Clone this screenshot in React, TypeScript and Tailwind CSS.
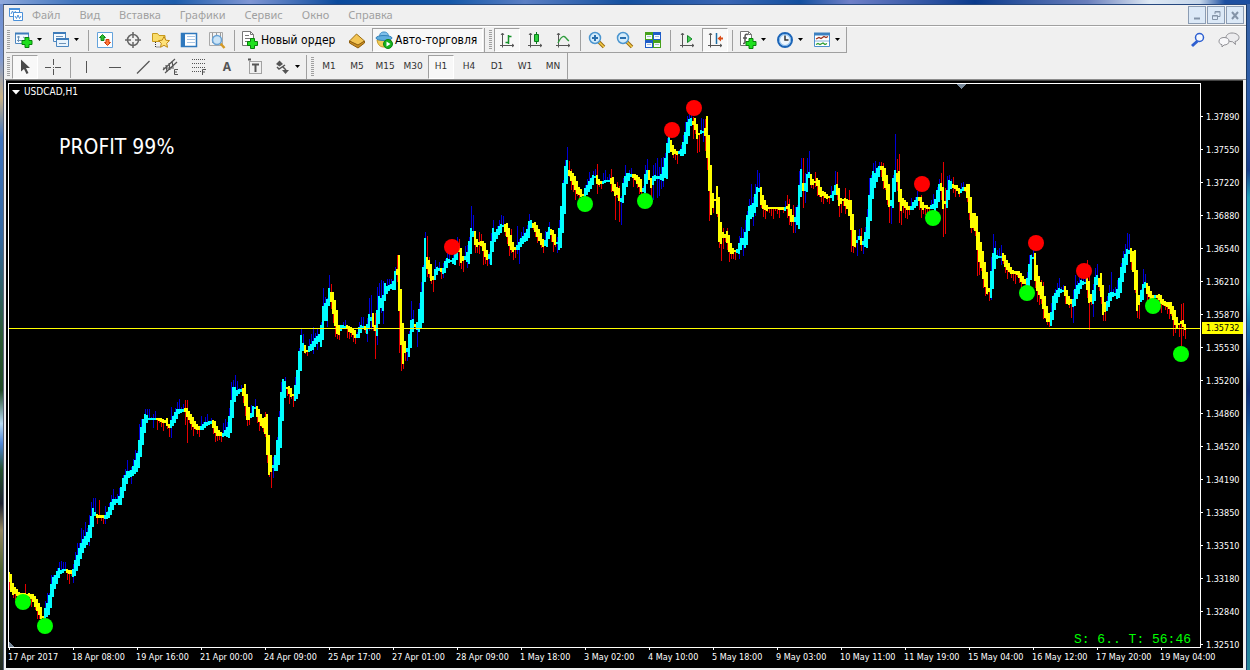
import type { ReactNode } from "react"

type Bar = { x: number; top: number; bottom: number; high: number; low: number; up: boolean }

// middle of the candle bodies, x / y on the chart canvas
const curve: number[][] = [
  [9, 577], [13, 589], [19, 594], [29, 595], [33, 598], [38, 607], [43, 617], [47, 610], [50, 602], [52, 590],
  [55, 582], [59, 573], [65, 570], [70, 572], [73, 573], [75, 568], [78, 560], [82, 548], [85, 542], [88, 537],
  [91, 527], [94, 513], [97, 516], [105, 517], [108, 515], [114, 502], [120, 500], [123, 488], [128, 475], [132, 473],
  [135, 467], [138, 460], [141, 442], [143, 432], [146, 419], [157, 419], [167, 422], [169, 426], [172, 423], [178, 412],
  [185, 410], [190, 417], [195, 425], [200, 429], [205, 425], [212, 422], [215, 427], [218, 433], [223, 435], [228, 431],
  [230, 423], [232, 410], [234, 395], [238, 392], [242, 390], [245, 395], [247, 407], [250, 417], [255, 408], [258, 413],
  [262, 422], [266, 427], [268, 442], [269, 455], [272, 468], [275, 463], [278, 452], [280, 430], [282, 410], [284, 390],
  [287, 388], [290, 391], [293, 395], [295, 393], [298, 380], [300, 365], [301, 353], [303, 347], [307, 351], [312, 347],
  [317, 340], [322, 335], [323, 323], [325, 312], [327, 310], [329, 297], [331, 297], [333, 303], [336, 318], [339, 330],
  [342, 327], [347, 327], [352, 331], [357, 336], [362, 327], [367, 329], [370, 318], [373, 320], [375, 328], [377, 323],
  [380, 303], [383, 303], [385, 292], [390, 287], [394, 285], [397, 272], [399, 283], [401, 317], [403, 343], [405, 347],
  [407, 350], [410, 343], [412, 325], [416, 326], [418, 326], [421, 310], [424, 287], [425, 260], [427, 263], [429, 267],
  [433, 278], [438, 269], [443, 271], [448, 261], [454, 261], [457, 253], [459, 249], [462, 259], [467, 257], [470, 250],
  [472, 232], [474, 236], [477, 243], [482, 244], [485, 250], [488, 258], [491, 253], [493, 240], [498, 232], [503, 226],
  [507, 230], [510, 240], [514, 249], [518, 247], [523, 240], [527, 235], [531, 224], [535, 227], [538, 233], [543, 243],
  [546, 243], [550, 230], [554, 238], [557, 243], [560, 237], [562, 217], [565, 190], [567, 172], [569, 173], [572, 177],
  [575, 183], [578, 190], [583, 195], [587, 190], [590, 185], [595, 177], [599, 182], [602, 183], [606, 181], [612, 181],
  [615, 190], [618, 192], [621, 200], [623, 193], [626, 182], [630, 175], [635, 177], [640, 183], [643, 190], [647, 177],
  [649, 175], [651, 183], [655, 178], [662, 177], [665, 168], [668, 157], [669, 142], [673, 150], [677, 153], [682, 152],
  [685, 143], [687, 133], [691, 122], [695, 124], [698, 135], [701, 132], [705, 132], [708, 140], [709, 163], [711, 190],
  [713, 200], [717, 200], [718, 213], [721, 233], [723, 235], [727, 237], [730, 247], [733, 251], [738, 251], [742, 242],
  [745, 240], [747, 230], [750, 213], [753, 210], [757, 197], [759, 190], [763, 202], [767, 208], [777, 208], [785, 209],
  [788, 207], [792, 218], [796, 220], [799, 207], [801, 183], [803, 187], [806, 187], [809, 175], [812, 182], [817, 182],
  [821, 192], [825, 195], [828, 197], [833, 196], [836, 187], [838, 192], [840, 202], [843, 200], [848, 205], [851, 215],
  [853, 230], [856, 243], [859, 238], [863, 243], [866, 238], [868, 227], [870, 207], [873, 185], [877, 175], [881, 168],
  [885, 178], [888, 192], [891, 203], [893, 193], [896, 175], [898, 180], [901, 200], [905, 204], [910, 209], [914, 205],
  [919, 199], [923, 206], [930, 208], [935, 205], [939, 193], [941, 187], [943, 198], [946, 205], [948, 193], [951, 185],
  [957, 188], [960, 192], [964, 188], [968, 192], [970, 205], [972, 220], [976, 223], [978, 243], [981, 255], [984, 270],
  [987, 283], [989, 290], [992, 282], [994, 260], [996, 257], [1003, 257], [1007, 265], [1012, 272], [1018, 273], [1023, 280],
  [1027, 283], [1030, 272], [1033, 258], [1035, 267], [1038, 283], [1042, 293], [1045, 307], [1048, 317], [1051, 319], [1053, 308],
  [1056, 298], [1060, 291], [1065, 291], [1068, 300], [1073, 303], [1077, 292], [1082, 283], [1087, 283], [1089, 292], [1092, 301],
  [1094, 293], [1097, 280], [1101, 285], [1103, 300], [1106, 310], [1108, 302], [1112, 295], [1117, 294], [1120, 285], [1123, 270],
  [1127, 257], [1129, 252], [1132, 257], [1135, 270], [1137, 290], [1139, 300], [1143, 292], [1145, 285], [1148, 290], [1152, 297],
  [1158, 296], [1163, 302], [1170, 306], [1174, 315], [1178, 325], [1182, 322], [1185, 327],
]

// long wicks: x -> [high, low], 0 keeps the default
const wicks: Record<number, number[]> = {
  25: [584, 0], 37: [0, 619], 39: [0, 619], 51: [575, 0], 53: [575, 0], 63: [562, 0], 65: [562, 0], 73: [0, 583],
  75: [552, 0], 77: [543, 0], 79: [543, 0], 81: [528, 0], 85: [522, 0], 89: [515, 546], 91: [502, 0], 93: [498, 0], 95: [498, 0],
  97: [0, 524], 99: [500, 0], 105: [0, 524], 127: [460, 0], 131: [467, 484], 139: [424, 463], 145: [409, 0], 147: [409, 0],
  153: [0, 428], 169: [0, 437], 171: [407, 438], 185: [400, 425], 187: [400, 443], 217: [0, 441], 221: [0, 442], 225: [419, 0],
  231: [382, 0], 233: [380, 0], 235: [375, 0], 247: [0, 426], 255: [399, 0], 265: [412, 437], 267: [0, 463], 271: [0, 488],
  273: [0, 478], 281: [382, 0], 283: [379, 0], 293: [0, 407], 313: [327, 354], 317: [0, 350], 323: [288, 0], 325: [297, 0],
  327: [0, 327], 329: [275, 0], 331: [284, 0], 333: [296, 323], 335: [0, 337], 339: [0, 340], 349: [0, 339], 355: [0, 344],
  361: [317, 0], 363: [317, 0], 367: [0, 342], 369: [298, 331], 371: [295, 330], 375: [313, 359], 377: [287, 345],
  379: [283, 0], 381: [280, 313], 383: [281, 324], 387: [279, 0], 391: [279, 0], 397: [255, 0], 399: [257, 353],
  401: [0, 371], 403: [0, 369], 407: [0, 361], 411: [301, 346], 413: [310, 0], 417: [322, 347], 419: [303, 0], 425: [232, 0],
  427: [236, 0], 429: [257, 278], 433: [0, 292], 439: [262, 0], 443: [263, 278], 459: [239, 266], 461: [0, 269], 463: [0, 272],
  467: [245, 268], 469: [237, 0], 471: [206, 0], 473: [215, 0], 475: [0, 253], 479: [232, 0], 481: [234, 0], 483: [0, 265],
  487: [0, 266], 489: [0, 264], 491: [233, 0], 503: [216, 0], 511: [229, 253], 513: [0, 260], 517: [226, 254], 519: [0, 264],
  531: [220, 0], 537: [0, 243], 549: [222, 0], 557: [0, 253], 567: [147, 0], 569: [161, 0], 571: [169, 190],
  597: [164, 0], 605: [170, 0], 611: [169, 192], 615: [0, 220], 617: [182, 198], 619: [186, 222], 621: [0, 225], 623: [178, 0],
  625: [165, 0], 645: [165, 0], 647: [159, 0], 651: [0, 198], 653: [165, 200], 655: [163, 0], 657: [158, 198], 659: [167, 196],
  661: [158, 189], 663: [157, 187], 665: [153, 0], 669: [137, 0], 687: [116, 0], 693: [117, 139], 695: [0, 134], 697: [0, 153],
  699: [0, 152], 701: [118, 0], 703: [119, 142], 705: [119, 151], 707: [130, 170], 709: [0, 221], 711: [0, 214], 713: [0, 213],
  719: [0, 248], 721: [0, 261], 723: [228, 249], 727: [228, 0], 731: [0, 259], 739: [236, 259], 741: [227, 0], 743: [0, 256],
  745: [220, 0], 751: [184, 0], 753: [197, 226], 755: [184, 216], 757: [170, 0], 759: [173, 0], 763: [0, 217], 787: [195, 0],
  789: [199, 225], 793: [205, 233], 795: [0, 233], 799: [171, 0], 801: [158, 0], 803: [158, 208], 805: [173, 203],
  807: [158, 0], 809: [151, 0], 811: [0, 188], 815: [172, 187], 835: [171, 0], 837: [172, 200], 839: [0, 217], 841: [0, 213],
  845: [188, 0], 849: [190, 207], 851: [200, 252], 853: [0, 253], 857: [0, 256], 861: [228, 251], 863: [0, 254], 869: [178, 0],
  873: [163, 0], 875: [161, 0], 881: [162, 0], 883: [163, 189], 889: [0, 223], 891: [0, 224], 895: [134, 0], 897: [159, 0],
  899: [154, 223], 901: [0, 225], 907: [0, 219], 921: [195, 218], 933: [194, 0], 939: [179, 0], 941: [173, 0], 943: [162, 237],
  945: [188, 234], 947: [176, 0], 949: [175, 0], 953: [177, 0], 963: [182, 0], 971: [0, 233], 977: [0, 276], 979: [0, 275],
  983: [0, 288], 987: [0, 295], 989: [0, 301], 991: [257, 300], 993: [234, 0], 995: [241, 0], 1001: [245, 265], 1033: [250, 0],
  1035: [253, 0], 1037: [0, 302], 1039: [0, 305], 1041: [280, 0], 1043: [282, 319], 1045: [0, 319], 1049: [0, 327],
  1071: [0, 318], 1073: [0, 323], 1075: [275, 0], 1087: [260, 0], 1089: [270, 330], 1093: [0, 317], 1097: [264, 0],
  1103: [0, 321], 1105: [0, 321], 1111: [272, 0], 1127: [233, 0], 1129: [234, 0], 1135: [258, 0], 1137: [0, 318],
  1139: [0, 319], 1143: [269, 299], 1145: [274, 0], 1173: [0, 336], 1175: [0, 333], 1179: [0, 337], 1181: [304, 346],
  1183: [303, 0], 1185: [0, 339],
}

const signals = [
  [23, 602, 1], [45, 626, 1], [452, 247, 0], [585, 204, 1], [645, 201, 1], [672, 130, 0], [694, 108, 0], [922, 184, 0],
  [933, 218, 1], [1027, 293, 1], [1036, 243, 0], [1084, 271, 0], [1153, 306, 1], [1181, 354, 1],
]

const prices = [
  "1.37890", "1.37550", "1.37220", "1.36880", "1.36540", "1.36210", "1.35870", "1.35530", "1.35200", "1.34860",
  "1.34520", "1.34190", "1.33850", "1.33510", "1.33180", "1.32840", "1.32510",
]

const times = [
  "17 Apr 2017", "18 Apr 08:00", "19 Apr 16:00", "21 Apr 00:00", "24 Apr 09:00", "25 Apr 17:00", "27 Apr 01:00",
  "28 Apr 09:00", "1 May 18:00", "3 May 02:00", "4 May 10:00", "5 May 18:00", "9 May 03:00", "10 May 11:00",
  "11 May 19:00", "15 May 04:00", "16 May 12:00", "17 May 20:00", "19 May 04:00",
]

const menu = ["Файл", "Вид", "Вставка", "Графики", "Сервис", "Окно", "Справка"]
const frames = ["M1", "M5", "M15", "M30", "H1", "H4", "D1", "W1", "MN"]

function levelAt(x: number) {
  const i = curve.findIndex((p) => p[0] >= x)
  if (i <= 0) return i === 0 ? curve[0][1] : curve[curve.length - 1][1]
  const [x0, y0] = curve[i - 1]
  const [x1, y1] = curve[i]
  return y0 + ((y1 - y0) * (x - x0)) / (x1 - x0)
}

function buildBars(): Bar[] {
  const bars: Bar[] = []
  let up = false
  for (let x = 9; x <= 1185; x += 2) {
    const y = levelAt(x)
    const step = (levelAt(x + 2) - levelAt(x - 2)) / 2
    if (Math.abs(step) > 0.3) up = step < 0
    const half = Math.max(1, Math.min(Math.abs(step) * 1.3 + 1, 28))
    const top = Math.round(y - half)
    const bottom = Math.round(y + half)
    const tail = (x * 7) % 11
    const long = wicks[x] ?? [0, 0]
    bars.push({
      x,
      top,
      bottom,
      high: long[0] || (up ? top - tail : top),
      low: long[1] || (up ? bottom : bottom + tail),
      up,
    })
  }
  return bars
}

const bars = buildBars()

function Icon({ children, w = 18 }: { children: ReactNode; w?: number }) {
  return (
    <svg width={w} height="18" viewBox={`0 0 ${w} 18`} fill="none" className="shrink-0" aria-hidden="true">
      {children}
    </svg>
  )
}

function Grip() {
  return (
    <div className="w-[3px] h-5 mx-px self-center shrink-0 bg-[repeating-linear-gradient(to_bottom,#a0a0a0_0px,#a0a0a0_1px,#f0f0f0_1px,#f0f0f0_2px)]" />
  )
}

function Sep() {
  return (
    <div className="w-1.5 h-[21px] self-center shrink-0 flex justify-center">
      <div className="w-px bg-[#a0a0a0]" />
    </div>
  )
}

function Tool({ label, active, children }: { label: string; active?: boolean; children: ReactNode }) {
  return (
    <button
      aria-label={label}
      className={
        active
          ? "w-[26px] mx-px h-6 shrink-0 flex items-center justify-center bg-[#f8f8f8] border border-t-[#a0a0a0] border-l-[#a0a0a0] border-r-white border-b-white"
          : "w-7 h-6 shrink-0 flex items-center justify-center"
      }
    >
      {children}
    </button>
  )
}

function DropTool({ label, children }: { label: string; children: ReactNode }) {
  return (
    <button aria-label={label} className="w-[37px] h-6 pl-1 gap-1 shrink-0 flex items-center">
      {children}
      <svg width="5" height="4" viewBox="0 0 5 4" aria-hidden="true">
        <path d="M0 0h5L2.500 3z" fill="#000" />
      </svg>
    </button>
  )
}

function Plus({ x, y }: { x: number; y: number }) {
  return (
    <path
      transform={`translate(${x} ${y})`}
      d="M3.500 .5h4v3h3v4h-3v3h-4v-3h-3v-4h3z"
      fill="#1fe01f"
      stroke="#08820c"
    />
  )
}

function Axes() {
  return <path d="M4.500 2.500v14M2 14.500h14M3 4l1.500-2L6 4M14 13l2 1.500-2 1.500" stroke="#555" />
}

function Magnifier({ minus }: { minus?: boolean }) {
  return (
    <Icon>
      <path d="M11 11l5 5" stroke="#9a6a10" strokeWidth="3.500" />
      <path d="M11 11l5 5" stroke="#f5cf4a" strokeWidth="1.500" />
      <circle cx="7" cy="7" r="5.500" fill="#d5ecfb" stroke="#4b95cf" strokeWidth="1.500" />
      <path d={minus ? "M4 7h6" : "M4 7h6M7 4v6"} stroke="#2a6fae" strokeWidth="2" />
    </Icon>
  )
}

function Sheet() {
  return (
    <>
      <path d="M1.500 .5h8l3 3v11h-11z" fill="#fff" stroke="#777" />
      <path d="M9.500 .5v3h3" stroke="#777" />
    </>
  )
}

function MenuBar() {
  return (
    <div className="h-[21px] flex items-center justify-between border-b border-[#a0a0a0]">
      <nav className="flex items-center pl-[3px]">
        <Icon>
          <path d="M1.500 2.500h10v8h-10z" fill="#fff" stroke="#4a90d9" />
          <path d="M1 3h11" stroke="#4a90d9" strokeWidth="2" />
          <path d="M3 8l1.500-3L6 8l1.500-3" stroke="#4a90d9" />
          <path d="M5.500 6.500h9v8h-9z" fill="#fff" stroke="#4a90d9" />
          <path d="M7 10l1.500 2.500L10 9l1.500 3.500L13 10" stroke="#4a90d9" />
        </Icon>
        <div className="flex gap-[19px] pl-1.5">
          {menu.map((m) => (
            <button key={m} className="text-[11px] leading-5 text-[#a0a0a0]">
              {m}
            </button>
          ))}
        </div>
      </nav>
      <div className="flex gap-px pr-0.5">
        {[
          ["Свернуть", "M5 11.500h6"],
          ["Восстановить", "M4.500 8.500h5v4h-5zM4.500 9h5M7 7V4.500h5v5h-2M7 5h5"],
          ["Закрыть", "M5 5l6 7M11 5l-6 7"],
        ].map(([label, d]) => (
          <button
            key={label}
            aria-label={label}
            className="w-[18px] h-[18px] flex items-center justify-center border border-[#8b9cb3] bg-[#dce9f7]"
          >
            <svg width="16" height="16" viewBox="0 0 16 16" fill="none" aria-hidden="true">
              <path d={d} stroke="#8494a8" strokeWidth={label === "Восстановить" ? 1 : 2} />
            </svg>
          </button>
        ))}
      </div>
    </div>
  )
}

function MainToolbar() {
  return (
    <div className="flex items-start justify-between pl-px">
      <div className="h-[26px] pt-px flex items-center border-b border-r border-[#a0a0a0]">
        <Grip />
        <DropTool label="Новый график">
          <Icon>
            <path d="M.5 2.500h13v10H.5z" fill="#f4faff" stroke="#4c87c0" />
            <path d="M0 2.500h14" stroke="#3e7cba" strokeWidth="2" />
            <path d="M3.500 5v6M2 6h3M2 9.500h8M8 6l2 1" stroke="#6f94b8" />
            <Plus x={6.5} y={6} />
          </Icon>
        </DropTool>
        <DropTool label="Профили">
          <Icon>
            <path d="M1.500 1.500h12v9h-12z" fill="#f4faff" stroke="#4c87c0" />
            <path d="M1 2h13" stroke="#3e7cba" strokeWidth="2" />
            <path d="M4 5.500h7M4 8h4" stroke="#6f94b8" />
            <path d="M4.500 7.500h12v8h-12z" fill="#e9f4fd" stroke="#4c87c0" />
            <path d="M4 8h13" stroke="#3e7cba" strokeWidth="2" />
            <path d="M7 12.500h7" stroke="#6f94b8" />
          </Icon>
        </DropTool>
        <Sep />
        <Tool label="Обзор рынка">
          <Icon>
            <path d="M1.500 1.500h15v15h-15z" fill="#fdfeff" stroke="#64a3dc" />
            <path d="M6.500 3.500l3 3H8v3H5v-3H3.500z" fill="#2fc12f" stroke="#10861a" />
            <path d="M11.500 14.500l-3-3H10v-3h3v3h1.500z" fill="#ff7a3c" stroke="#cf3c0c" />
          </Icon>
        </Tool>
        <Tool label="Окно данных">
          <Icon>
            <circle cx="9" cy="9" r="5.500" stroke="#666" strokeWidth="1.500" />
            <path d="M9 1v6M9 11v6M1 9h6M11 9h6" stroke="#666" strokeWidth="1.500" />
          </Icon>
        </Tool>
        <Tool label="Навигатор">
          <Icon>
            <path d="M.5 2.500h5l1.500 2h6v6H.5z" fill="#f9dc6b" stroke="#c79a1d" />
            <path d="M3.500 11v5h5" stroke="#333" strokeDasharray="1 1" />
            <path d="M12 5.500l1.800 3.700 3.700.4-2.800 2.700.8 4-3.500-2-3.500 2 .8-4L6.500 9.600l3.700-.4z" fill="#ffe27a" stroke="#c08a12" />
          </Icon>
        </Tool>
        <Tool label="Терминал">
          <Icon>
            <path d="M1.500 2.500h15v13h-15z" fill="#fff" stroke="#2f78bd" strokeWidth="1.500" />
            <path d="M2 3h3v12H2z" fill="#2f78bd" />
            <path d="M7 5.500h8M7 8.500h8M7 11.500h8" stroke="#a9c6e4" />
          </Icon>
        </Tool>
        <Tool label="Тестер стратегий">
          <Icon>
            <path d="M1.500 1.500h13v13h-13z" fill="#f3f3f3" stroke="#a9a9a9" />
            <path d="M4.500 2v10M8.500 2v4M12.500 2v5" stroke="#999" />
            <path d="M12 12l4.500 5" stroke="#d59a24" strokeWidth="2.500" />
            <circle cx="9" cy="9" r="4.500" fill="#cbe4f7" stroke="#69a3d6" strokeWidth="1.500" />
          </Icon>
        </Tool>
        <Sep />
        <button className="w-[106px] h-6 pl-1 shrink-0 flex items-center gap-0.5 font-['DejaVu_Sans_Condensed','Noto_Sans',sans-serif] text-[12px] text-black whitespace-nowrap">
          <Icon>
            <Sheet />
            <path d="M4 4.500h4M4 7.500h6M4 10.500h4" stroke="#777" />
            <Plus x={6} y={7} />
          </Icon>
          Новый ордер
        </button>
        <Tool label="Редактор">
          <Icon>
            <path d="M1.500 10l7-7 8 7-6 6z" fill="#f3c555" stroke="#9c6d12" />
            <path d="M1.500 10v2l8.500 5 6.500-5v-2L10 14z" fill="#c98d20" stroke="#8d5e10" />
          </Icon>
        </Tool>
        <button className="w-[111px] mx-px h-6 pl-0.5 shrink-0 flex items-center gap-0.5 font-['DejaVu_Sans_Condensed','Noto_Sans',sans-serif] text-[12px] text-black whitespace-nowrap bg-[#f8f8f8] border border-t-[#a0a0a0] border-l-[#a0a0a0] border-r-white border-b-white">
          <Icon>
            <path d="M2 9c1 6 4 7 7 7 4 0 6-3 7-7z" fill="#f0cc58" stroke="#c79c28" />
            <path d="M4.500 6c0-4 2-5 4.500-5s4.500 1 4.500 5" fill="#7fc0ea" stroke="#3d8cc4" />
            <ellipse cx="9" cy="7" rx="8" ry="2.500" fill="#5fadde" stroke="#3380b8" />
            <circle cx="13" cy="13" r="4.500" fill="#15b21c" stroke="#0c8313" />
            <path d="M11.500 10.500l4 2.500-4 2.500z" fill="#fff" />
          </Icon>
          Авто-торговля
        </button>
        <div className="w-px h-full bg-[#a0a0a0] mr-[3px]" />
        <Grip />
        <Tool label="Бары" active>
          <Icon>
            <Axes />
            <path d="M10.500 4v9M10.500 5.500h3M7.500 11.500h3" stroke="#16922a" strokeWidth="1.500" />
          </Icon>
        </Tool>
        <Tool label="Японские свечи">
          <Icon>
            <Axes />
            <path d="M10.500 1v12" stroke="#0b7a1c" />
            <path d="M8.500 3.500h4v7h-4z" fill="#2ed13d" stroke="#0b7a1c" />
          </Icon>
        </Tool>
        <Tool label="Линия">
          <Icon>
            <Axes />
            <path d="M4 12C6 8 8 5 10 5.500S13 9 15 10" stroke="#2f9c3c" strokeWidth="1.300" />
          </Icon>
        </Tool>
        <Sep />
        <Tool label="Увеличить">
          <Magnifier />
        </Tool>
        <Tool label="Уменьшить">
          <Magnifier minus />
        </Tool>
        <Tool label="Окна мозаикой">
          <Icon>
            <path d="M1 1h8v8H1zM9 9h8v8H9z" fill="#46a11c" />
            <path d="M9 1h8v8H9zM1 9h8v8H1z" fill="#1e5cc8" />
            <path d="M2 4h6v4H2zM10 4h6v4h-6zM2 12h6v4H2zM10 12h6v4h-6z" fill="#f5faff" />
            <path d="M3 5.500h4M11 5.500h4M3 13.500h4M11 13.500h4" stroke="#a8bcd0" />
          </Icon>
        </Tool>
        <Sep />
        <Tool label="Автопрокрутка">
          <Icon>
            <Axes />
            <path d="M9.500 4.500l4.500 3.500-4.500 3.500z" fill="#45d052" stroke="#15852a" />
          </Icon>
        </Tool>
        <Tool label="Сдвиг графика" active>
          <Icon>
            <Axes />
            <path d="M10.500 2v11" stroke="#1c6ea6" strokeWidth="1.500" />
            <path d="M11.500 7.500L15 4.500v2h2v2h-2v2z" fill="#d94c17" />
          </Icon>
        </Tool>
        <Sep />
        <DropTool label="Индикаторы">
          <Icon>
            <Sheet />
            <path d="M9 3.500c-3-1-3 1-3 3v5c0 1-1 1-2 1M4 7h4" stroke="#555" strokeWidth="1.500" />
            <Plus x={6.5} y={7} />
          </Icon>
        </DropTool>
        <DropTool label="Периоды">
          <Icon>
            <circle cx="9" cy="9" r="7" fill="#eef6fd" stroke="#1c65b8" strokeWidth="2" />
            <circle cx="9" cy="9" r="5.500" stroke="#79b4ea" />
            <path d="M9 4.500V9h3.500" stroke="#333" strokeWidth="1.500" />
          </Icon>
        </DropTool>
        <DropTool label="Шаблоны">
          <Icon>
            <path d="M1.500 2.500h15v13h-15z" fill="#fff" stroke="#4b8fcd" />
            <path d="M1 3h16" stroke="#3c80c0" strokeWidth="3" />
            <path d="M2 10h14" stroke="#88b4dc" />
            <path d="M3 8l3-1.500 2 1 3-2 2 1 2-1" stroke="#9b2f1a" strokeWidth="1.300" />
            <path d="M3 13.500l2-1 2 1 3-1.500 2 1.500 2-1" stroke="#2b9b30" strokeWidth="1.300" />
          </Icon>
        </DropTool>
      </div>
      <div className="h-[26px] flex items-center gap-3 pr-1.5">
        <button aria-label="Поиск">
          <svg width="16" height="16" viewBox="0 0 16 16" fill="none" aria-hidden="true">
            <path d="M7.500 9L2 14" stroke="#2d5fd0" strokeWidth="3" />
            <circle cx="9.500" cy="5.500" r="4" fill="#f4f8ff" stroke="#2d5fd0" strokeWidth="1.500" />
          </svg>
        </button>
        <button aria-label="Сообщения">
          <svg width="22" height="16" viewBox="0 0 22 16" fill="none" aria-hidden="true">
            <path d="M14 1c4 0 7 2 7 4.500 0 2-1.500 3.500-4 4l.5 3-3-2.800C10.500 9.700 8 8 8 5.500S10.500 1 14 1z" fill="#ececee" stroke="#8f8f94" />
            <path d="M6 5.500c3 0 5 1.300 5 3.700S9 13 6 13l-2 2v-2.300C2 12.200 1 11 1 9.200 1 7 3 5.500 6 5.500z" fill="#f8f8fa" stroke="#8f8f94" />
          </svg>
        </button>
      </div>
    </div>
  )
}

function DrawToolbar() {
  return (
    <div className="h-[27px] flex pl-px border-b border-[#8c8c8c]">
      <div className="flex items-center pt-0.5 border-r border-[#a0a0a0]">
        <Grip />
        <Tool label="Курсор" active>
          <Icon>
            <path d="M5 1.500v12l3-2.500 2.500 5 2-1-2.500-5h4z" fill="#4a4a4a" />
          </Icon>
        </Tool>
        <Tool label="Перекрестие">
          <Icon>
            <path d="M9.500 1v6M9.500 11v6M1 9.500h6M11 9.500h6M9 9.500h1" stroke="#555" />
          </Icon>
        </Tool>
        <Sep />
        <Tool label="Вертикальная линия">
          <Icon>
            <path d="M8.500 3v12" stroke="#555" />
          </Icon>
        </Tool>
        <Tool label="Горизонтальная линия">
          <Icon>
            <path d="M3 9.500h12" stroke="#555" />
          </Icon>
        </Tool>
        <Tool label="Трендовая линия">
          <Icon>
            <path d="M3 15.500L15.500 3" stroke="#555" strokeWidth="1.200" />
          </Icon>
        </Tool>
        <Tool label="Канал">
          <Icon>
            <path d="M1 12L13 1M3 15L15 4M4 7l1 7M7 5l1 7M10 3l1 6M1 10h11" stroke="#555" strokeWidth="1.200" />
            <path d="M16 11.500h-3.500v5H16M12.500 14H15" stroke="#555" />
          </Icon>
        </Tool>
        <Tool label="Фибоначчи">
          <Icon>
            <path d="M2 1.500h14M2 5.500h14M2 9.500h14M2 13.500h9" stroke="#555" strokeDasharray="1 1" />
            <path d="M16 11.500h-3.500v5.500M12.500 14H15" stroke="#555" />
          </Icon>
        </Tool>
        <Tool label="Текст">
          <span className="text-[12px] font-bold text-[#555]">A</span>
        </Tool>
        <Tool label="Метка">
          <Icon>
            <path d="M3.500 3.500h12v12h-12z" stroke="#555" strokeDasharray="1 1" />
            <path d="M6 6.500h7M9.500 6v8" stroke="#555" strokeWidth="2" />
            <path d="M2 1.500h3" stroke="#555" strokeWidth="2" />
          </Icon>
        </Tool>
        <DropTool label="Стрелки">
          <Icon>
            <path d="M3 6l3.500-3.500L10 6 6.500 8.500zM9 12h7l-3.500 4z" fill="#555" />
            <path d="M4 9l2 2 6-4M10 9l3 3" stroke="#555" strokeWidth="1.500" />
          </Icon>
        </DropTool>
        <div className="w-px h-full bg-[#a0a0a0] mr-[3px]" />
        <Grip />
        {frames.map((f) => (
          <Tool key={f} label={f} active={f === "H1"}>
            <span className="font-['DejaVu_Sans',sans-serif] text-[9px] text-[#333]">{f}</span>
          </Tool>
        ))}
      </div>
    </div>
  )
}

function Chart() {
  return (
    <svg viewBox="8 83 1193 565" preserveAspectRatio="none" className="block w-full h-[565px]" shapeRendering="crispEdges">
      {bars.map((b) => (
        <g key={b.x}>
          <rect x={b.x} y={b.high} width="1" height={Math.max(1, b.low - b.high)} fill={b.up ? "#0000d8" : "#e60000"} />
          <rect x={b.x - 1} y={b.top} width="2" height={b.bottom - b.top} fill={b.up ? "#00ffff" : "#ffff00"} />
        </g>
      ))}
      <rect x="8" y="328" width="1193" height="1" fill="#ffff00" />
      {signals.map(([x, y, buy]) => (
        <circle key={x} cx={x} cy={y} r="8" fill={buy ? "#00ff00" : "#ff0000"} shapeRendering="auto" />
      ))}
      <path d="M956 84h10l-5 5z" fill="#778899" />
      <path d="M9 642v5h5z" fill="#778899" />
      <path d="M8.500 83.500h1192v564H8.500z" fill="none" stroke="#fff" />
    </svg>
  )
}

export default function App() {
  return (
    <div className="min-h-screen flex flex-col overflow-hidden">
      {/* desktop showing round the window */}
      <div className="h-1 shrink-0 bg-[linear-gradient(to_right,#8fa9dc_0%,#3f74bd_6%,#1c5cab_14%,#7f96d4_20%,#0b4a9c_27%,#1558a8_36%,#5b7fc4_42%,#14509f_50%,#3a66b4_58%,#14509f_64%,#6f80c8_68%,#0a3a8c_78%,#6a7fbc_87%,#dfe9f4_92%,#c5d6ea_96%,#1d4fa0_98%)]" />
      <div className="flex-1 flex">
        <div className="w-[3px] shrink-0 bg-[linear-gradient(to_bottom,#6f8fd0_0%,#7d9ad6_8%,#c9b183_14%,#3f74bd_20%,#35689f_35%,#2c5a34_50%,#214a26_58%,#b9dcf5_63%,#4f86d8_66%,#24502c_70%,#1b2030_75%,#93865f_79%,#4d6230_85%,#232c24_100%)]" />
        <div className="flex-1 min-w-0 flex flex-col pl-px border-t border-t-[#26487f] border-l border-l-[#5a6478] border-r border-r-[#1b3a66] bg-[#f0f0f0] font-['Noto_Sans',sans-serif]">
          <MenuBar />
          <div className="h-px bg-white" />
          <MainToolbar />
          <DrawToolbar />

          {/* chart window */}
          <div className="ml-px mr-[3px] mb-0.5 flex-1 flex flex-col border-t border-[#444] bg-black text-white font-['DejaVu_Sans_Condensed','Noto_Sans',sans-serif] text-[9px]">
            <div className="flex pl-0.5 pt-0.5">
              <div className="relative flex-1 min-w-0">
                <Chart />
                <div className="absolute left-1 top-[3px] flex items-center gap-1 text-[10px] leading-3">
                  <svg width="8" height="5" viewBox="0 0 8 5" aria-hidden="true">
                    <path d="M0 0h8L4 4.500z" fill="#fff" />
                  </svg>
                  USDCAD,H1
                </div>
                <div className="absolute left-[51px] top-[52px] text-[21px] leading-6">PROFIT 99%</div>
                <div className="absolute right-2.5 bottom-0 font-['Liberation_Mono',monospace] text-[13px] leading-4 text-[#00ff00]">
                  S: 6.. T: 56:46
                </div>
              </div>
              <div className="relative w-[42px] h-[565px] shrink-0 pt-[17px]">
                {prices.map((p) => (
                  <div key={p} className="h-[33px] flex items-start">
                    <div className="pt-4">
                      <div className="w-0.5 h-px bg-white" />
                    </div>
                    <span className="pl-[3px] pt-[11px] leading-3">{p}</span>
                  </div>
                ))}
                <div className="absolute left-px right-0 top-[239px] h-3 pl-1 leading-3 bg-[#ffff00] text-black">
                  1.35732
                </div>
              </div>
            </div>
            <div className="flex pl-0.5 h-5">
              {times.map((t) => (
                <div key={t} className="w-16 shrink-0 whitespace-nowrap">
                  <div className="w-px h-0.5 ml-px bg-white" />
                  <div className="leading-[14px]">{t}</div>
                </div>
              ))}
            </div>
          </div>
        </div>
        <div className="w-[3px] shrink-0 bg-[linear-gradient(to_bottom,#3c66a8_0%,#2a5aa6_15%,#1a3f8c_25%,#20a0b8_29%,#2cc4d4_43%,#1a6fae_50%,#0f2c78_58%,#1668a8_66%,#1d6cae_85%,#2a8a9a_100%)]" />
      </div>
    </div>
  )
}
